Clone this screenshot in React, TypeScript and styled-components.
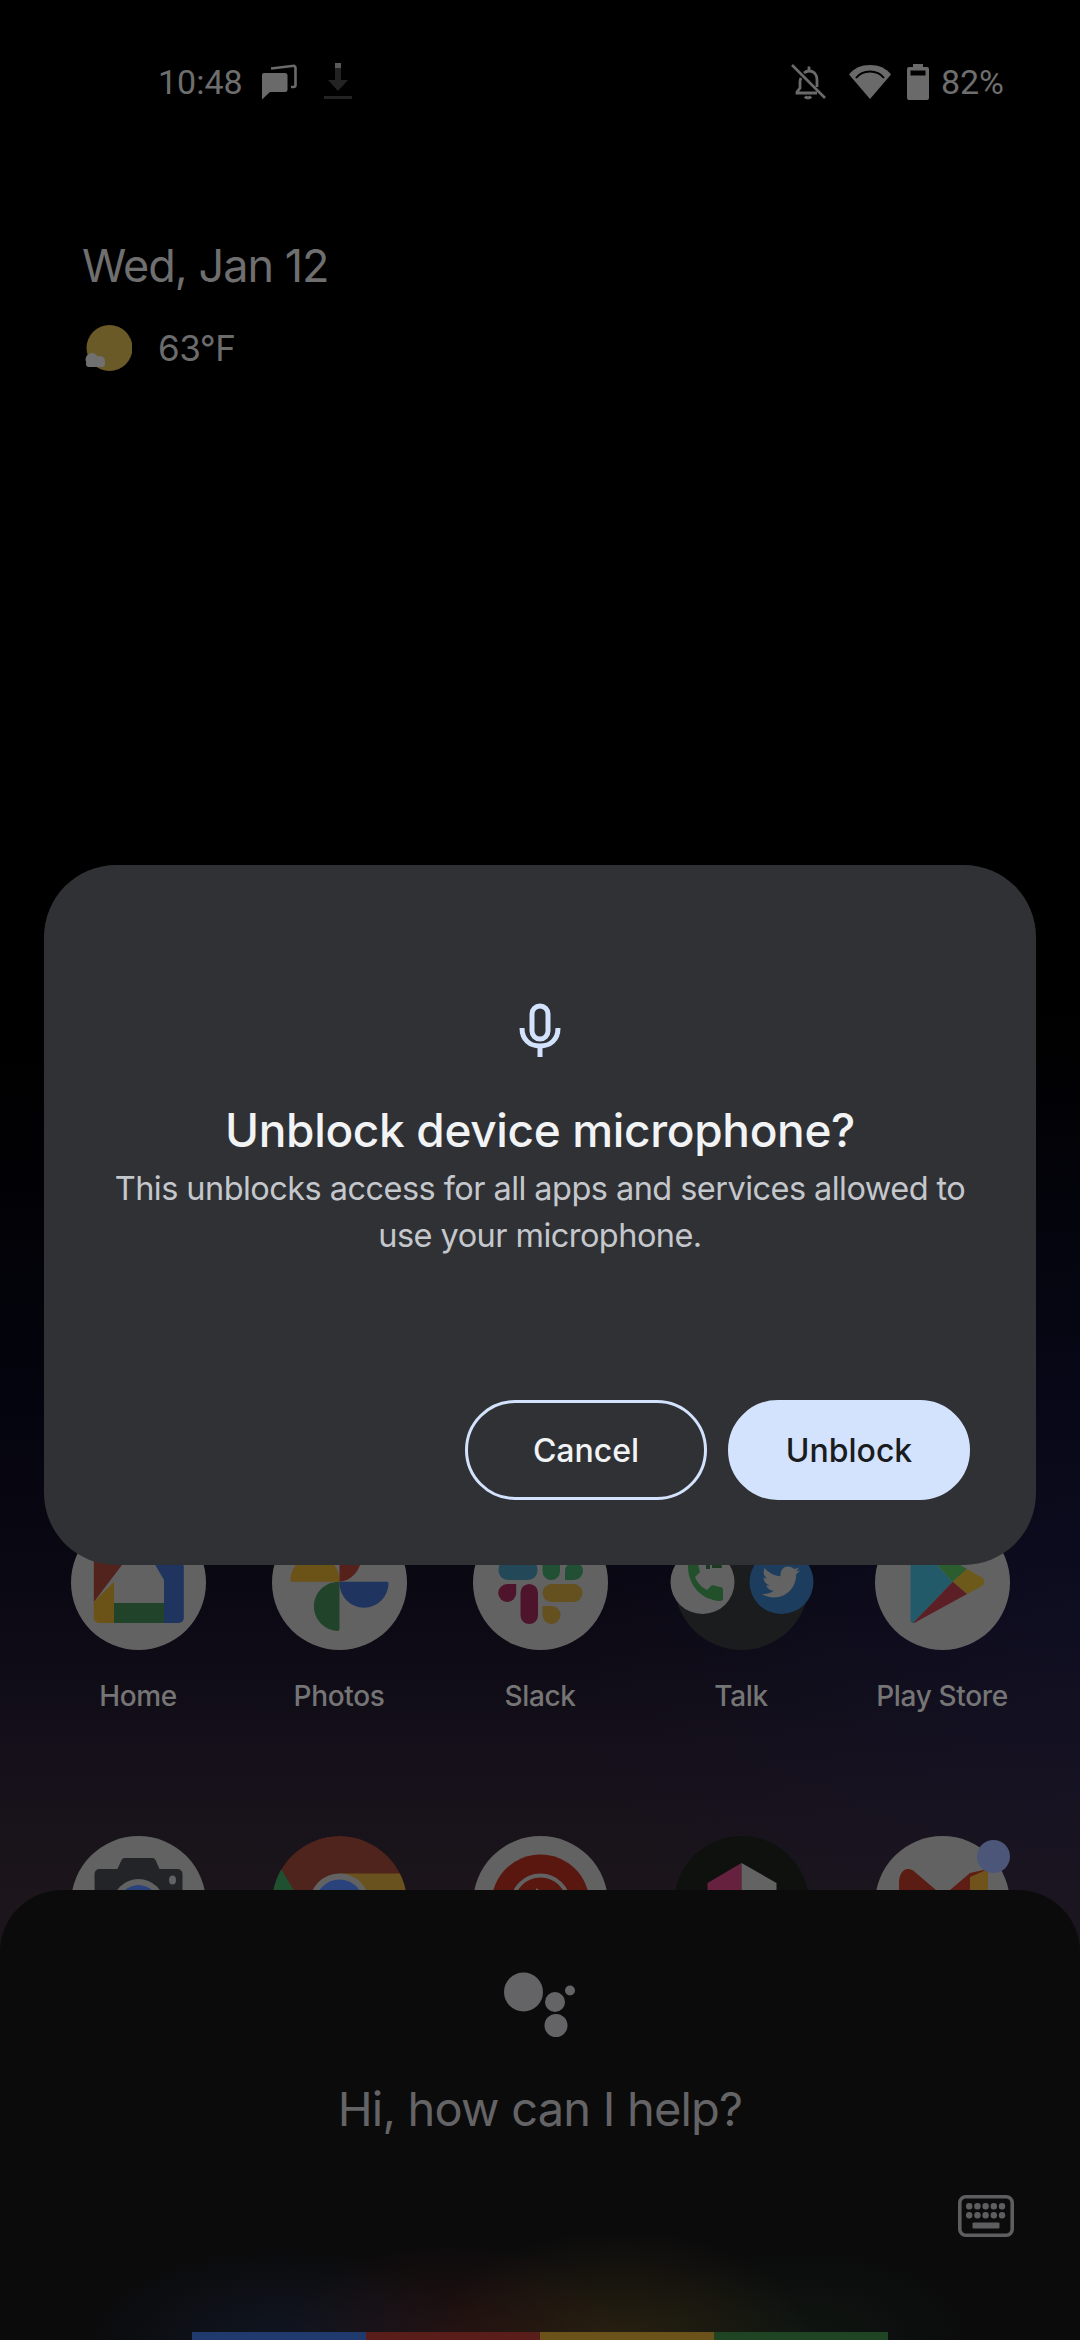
import * as React from 'react'
import styled, { createGlobalStyle } from 'styled-components'
import { FaTwitter } from 'react-icons/fa'

const GlobalStyle = createGlobalStyle`
  html, body {
    margin: 0;
    padding: 0;
    background: #000;
  }
`

const Screen = styled.div`
  position: relative;
  width: 1080px;
  height: 2340px;
  overflow: hidden;
  display: flex;
  flex-direction: column;
  font-family: Inter, Roboto, sans-serif;
  background:
    radial-gradient(ellipse 500px 600px at 1080px 1600px, rgba(20, 22, 60, 0.3), transparent),
    linear-gradient(180deg, #000 0, #000 1050px, #04040e 1400px, #0a0813 1580px, #15101a 1760px, #1c151b 1900px);
`

const StatusBar = styled.div`
  display: flex;
  align-items: center;
  height: 48px;
  margin-top: 58px;
  padding: 0 76px 0 158px;
  color: #6e6e6e;
  font-family: Roboto, sans-serif;
  font-size: 34px;
`

const StatusGroup = styled.div<{ $gap: number }>`
  display: flex;
  align-items: center;
  gap: ${({ $gap }) => $gap}px;
`

const Spacer = styled.div`
  flex: 1;
`

const DateBlock = styled.div`
  margin-top: 130px;
  padding-left: 82px;
`

const DateText = styled.div`
  color: #6f6f6f;
  font-size: 45px;
  line-height: 60px;
  letter-spacing: -1px;
`

const WeatherRow = styled.div`
  display: flex;
  align-items: center;
  gap: 26px;
  margin-top: 27px;
  color: #6c6c6c;
  font-size: 35px;
  line-height: 50px;
  letter-spacing: -0.5px;
`

const AppGrid = styled.div`
  display: grid;
  grid-template-columns: repeat(5, 201px);
  grid-template-rows: 321px 135px;
  margin-top: auto;
  padding: 0 37.5px 369px;
`

const AppTile = styled.div`
  position: relative;
  display: flex;
  flex-direction: column;
  align-items: center;
`

const AppIcon = styled.svg`
  display: block;
  width: 135px;
  height: 135px;
  overflow: visible;
`

const RoundAppIcon = styled(AppIcon)`
  overflow: hidden;
  border-radius: 50%;
`

const AppLabel = styled.div`
  margin-top: 28px;
  color: #757575;
  font-size: 28px;
  font-weight: 500;
  line-height: 36px;
  letter-spacing: -0.35px;
  white-space: nowrap;
`

const Badge = styled.div`
  position: absolute;
  top: 4px;
  left: 135px;
  width: 33px;
  height: 33px;
  border-radius: 50%;
  background: #4b5679;
`

const Dialog = styled.div`
  position: absolute;
  top: 865px;
  left: 44px;
  width: 992px;
  height: 700px;
  box-sizing: border-box;
  display: flex;
  flex-direction: column;
  align-items: center;
  padding: 138px 66px 65px;
  border-radius: 72px;
  background: #303135;
`

const DialogTitle = styled.h1`
  margin: 41px 0 0;
  color: #f1f3f4;
  font-size: 46px;
  font-weight: 500;
  line-height: 64px;
  letter-spacing: -0.35px;
  white-space: nowrap;
`

const DialogBody = styled.p`
  margin: 3px 0 0;
  width: 880px;
  color: #c4c7cc;
  font-size: 32.5px;
  line-height: 47px;
  letter-spacing: -0.55px;
  text-align: center;
`

const DialogActions = styled.div`
  display: flex;
  justify-content: flex-end;
  gap: 21px;
  width: 100%;
  margin-top: auto;
`

const PillButton = styled.button<{ $filled?: boolean }>`
  width: 242px;
  height: 100px;
  box-sizing: border-box;
  padding: 0;
  border: 3px solid #d3e3fd;
  border-radius: 50px;
  background: ${({ $filled }) => ($filled ? '#d3e3fd' : 'transparent')};
  color: ${({ $filled }) => ($filled ? '#1b1c1e' : '#f1f3f4')};
  font-family: Inter, Roboto, sans-serif;
  font-size: 32px;
  font-weight: 500;
`

const AssistantSheet = styled.div`
  position: absolute;
  top: 1890px;
  left: 0;
  right: 0;
  bottom: 0;
  display: flex;
  flex-direction: column;
  align-items: center;
  padding-top: 82px;
  border-radius: 62px 62px 0 0;
  background:
    radial-gradient(ellipse 190px 90px at 280px 450px, rgba(33, 58, 110, 0.22), transparent),
    radial-gradient(ellipse 170px 100px at 450px 450px, rgba(90, 30, 26, 0.3), transparent),
    radial-gradient(ellipse 190px 110px at 620px 450px, rgba(106, 82, 26, 0.3), transparent),
    radial-gradient(ellipse 170px 90px at 800px 450px, rgba(31, 68, 36, 0.18), transparent),
    #0b0b0c;
`

const AssistantPrompt = styled.div`
  margin-top: 39px;
  color: #646466;
  font-size: 47px;
  line-height: 64px;
  letter-spacing: -0.8px;
`

const KeyboardButton = styled.div`
  position: absolute;
  top: 305px;
  right: 66px;
  line-height: 0;
`

const ColorBar = styled.div`
  display: flex;
  width: 696px;
  height: 8px;
  margin-top: auto;
`

const ColorSegment = styled.div<{ $color: string }>`
  flex: 1;
  background: ${({ $color }) => $color};
`

const Grey = '#6a6a6a'
const Plate = '#626262'

const ChatIcon = () => (
  <svg width="45" height="36" viewBox="0 0 45 36">
    <path d="M3 9h21a2.500 2.500 0 0 1 2.500 2.500v14a2.500 2.500 0 0 1-2.500 2.500H9l-8 7.500V11a2 2 0 0 1 2-2z" fill={Grey} />
    <path d="M10 4.500 33 1.800a2 2 0 0 1 1.500 2V21a2 2 0 0 1-2 2H30" fill="none" stroke={Grey} strokeWidth="2.600" />
  </svg>
)

const DownloadIcon = () => (
  <svg width="28" height="38" viewBox="0 0 28 38">
    <rect x="11" y="0" width="6" height="5" fill="#5a5a5a" />
    <path d="M11 5h6v12h7L14 28 4 17h7z" fill="#232323" />
    <rect x="0" y="33" width="28" height="3" fill="#232323" />
  </svg>
)

const BellOffIcon = () => (
  <svg width="46" height="36" viewBox="0 0 46 36" fill="none" stroke={Grey} strokeWidth="2.800">
    <path d="M10 14c-.6 1-1 2.300-1 4v6l-3 4v1h20" />
    <path d="M13 9c1.300-1.100 3-2 5-2 5 0 8 3.500 8 9v7" />
    <path d="M18 7V2.500" />
    <path d="M14 32.500a4 4 0 0 0 6 0" strokeWidth="3" />
    <path d="M1 1l33 33" strokeWidth="2.600" />
  </svg>
)

const WifiIcon = () => (
  <svg width="46" height="36" viewBox="0 0 46 36">
    <path d="M0 10.500C5 4 12.500 1 21 1s16 3 21 9.500L21 35z" fill={Grey} />
    <path d="M7 14C10.500 9.500 15.500 7.500 21 7.500S31.500 9.500 35 14" fill="none" stroke="#000" strokeWidth="2" />
  </svg>
)

const BatteryIcon = () => (
  <svg width="22" height="36" viewBox="0 0 22 36">
    <path d="M6 0h10v3h4a2 2 0 0 1 2 2v29a2 2 0 0 1-2 2H2a2 2 0 0 1-2-2V5a2 2 0 0 1 2-2h4z" fill={Grey} />
    <rect x="3.500" y="6.500" width="15" height="5" fill="#000" />
  </svg>
)

const WeatherIcon = () => (
  <svg width="50" height="50" viewBox="0 0 50 50">
    <circle cx="27.500" cy="25" r="23" fill="#6a5a27" />
    <circle cx="10" cy="36.500" r="6.500" fill="#707070" />
    <circle cx="18" cy="38" r="5" fill="#707070" />
    <rect x="4" y="38" width="19" height="6" rx="3" fill="#707070" />
  </svg>
)

const MicIcon = () => (
  <svg width="44" height="54" viewBox="0 0 44 54" fill="none" stroke="#d3e3fd" strokeWidth="5">
    <rect x="14" y="3" width="16" height="33" rx="8" />
    <path d="M4 25c0 12 8 18 18 18s18-6 18-18" />
    <path d="M22 42v12" />
  </svg>
)

const AssistantLogo = () => (
  <svg width="72" height="66" viewBox="0 0 72 66" fill="#646466">
    <circle cx="19.500" cy="20" r="19.500" />
    <circle cx="51" cy="30" r="10" />
    <circle cx="66" cy="18.500" r="5" />
    <circle cx="52" cy="53.500" r="11.500" />
  </svg>
)

const KeyboardIcon = () => (
  <svg width="56" height="42" viewBox="0 0 56 42" fill="#5e5e60">
    <rect x="1.800" y="1.800" width="52.400" height="38.400" rx="6" fill="none" stroke="#5e5e60" strokeWidth="3.600" />
    {[0, 1].map(row =>
      [0, 1, 2, 3, 4].map(col => (
        <rect key={`${ row }-${ col }`} x={ 8 + col * 8.200 } y={ 8 + row * 9 } width="6.400" height="6.600" rx="3" />
      ))
    )}
    <rect x="14.500" y="27.500" width="27" height="6" rx="1" />
  </svg>
)

const HomeApp = () => (
  <AppIcon viewBox="0 0 135 135">
    <circle cx="67.500" cy="67.500" r="67.500" fill={Plate} />
    <path d="M22.800 87V44a6 6 0 0 1 2-4L45 22h22v7z" fill="#51231c" />
    <path d="M22.800 87 43 66.700V108H28a5 5 0 0 1-5.200-5z" fill="#6b5217" />
    <rect x="43" y="88" width="50" height="20" fill="#21432a" />
    <path d="M68 22h18l24 24a8 8 0 0 1 2.800 6v51a5 5 0 0 1-5 5H93V65z" fill="#1f3560" />
  </AppIcon>
)

const PhotosApp = () => (
  <AppIcon viewBox="0 0 135 135">
    <circle cx="67.500" cy="67.500" r="67.500" fill={Plate} />
    <path d="M18.500 65a24.500 24.500 0 0 1 49 0v1.700H20a1.500 1.500 0 0 1-1.500-1.700z" fill="#6b5217" />
    <path d="M67.500 18a24.500 24.500 0 0 1 0 48.700z" fill="#56211a" />
    <path d="M67.500 66.700H115a1.500 1.500 0 0 1 1.500 1.500 24.500 24.500 0 0 1-49 0z" fill="#1f3560" />
    <path d="M67.500 66.700V114a2 2 0 0 1-2 2 24.500 24.500 0 0 1 2-49.300z" fill="#21432a" />
  </AppIcon>
)

const SlackApp = () => (
  <AppIcon viewBox="0 0 135 135">
    <circle cx="67.500" cy="67.500" r="67.500" fill={Plate} />
    <rect x="25.500" y="45" width="39" height="20" rx="9.500" fill="#234858" />
    <rect x="69.500" y="25" width="17.500" height="40" rx="8.700" fill="#215035" />
    <path d="M92 65V56a9 9 0 1 1 9 9z" fill="#215035" />
    <path d="M43.200 69v9a9 9 0 1 1-9-9z" fill="#4e142b" />
    <rect x="47.500" y="69" width="17.500" height="40" rx="8.700" fill="#4e142b" />
    <rect x="69.500" y="69" width="40" height="18" rx="9" fill="#65501f" />
    <path d="M69.500 91h9a9 9 0 1 1-9 9z" fill="#65501f" />
  </AppIcon>
)

const TalkFolder = () => (
  <AppIcon viewBox="0 0 135 135">
    <circle cx="67.500" cy="67.500" r="67.500" fill="#1a1c1e" />
    <circle cx="28.500" cy="67" r="32" fill={Plate} />
    <circle cx="107.500" cy="67" r="32" fill="#1c3d5e" />
    <path d="M14 51c0 20 14 34 32 35 2 0 3-1 3-3v-8c0-2-1-3-3-3l-8-2-5 5c-6-3-10-8-12-13l5-5-2-8c0-2-2-3-4-3h-3c-2 0-3 2-3 5z" fill="#21502b" />
    <path d="M32 41h4v13h-4z M38 41a12 12 0 0 1 10 12h-10z" fill="#1c3a22" />
    <foreignObject x="88" y="48" width="38" height="38">
      <FaTwitter size={ 38 } color="#636363" />
    </foreignObject>
  </AppIcon>
)

const PlayApp = () => (
  <AppIcon viewBox="0 0 135 135">
    <circle cx="67.500" cy="67.500" r="67.500" fill={Plate} />
    <path d="M37 24 77.800 66.700 38 108c-1.500 0-2.500-1-2.500-3V27c0-1 .5-2.500 1.500-3z" fill="#235a6a" />
    <path d="M38 24c1-.500 2 0 3 .500L92 54 77.800 66.700z" fill="#2b5d2f" />
    <path d="M92 54l15 8.500c3 2 3 6 0 8.500L92 79 77.800 66.700z" fill="#6d5a1a" />
    <path d="M77.800 66.700 92 79 41 107c-1 .7-2 1-3 1z" fill="#5c1f26" />
  </AppIcon>
)

const CameraApp = () => (
  <AppIcon viewBox="0 0 135 135">
    <circle cx="67.500" cy="67.500" r="67.500" fill={Plate} />
    <path d="M23.500 38a5 5 0 0 1 5-5h18l4-9a4 4 0 0 1 3-2h28a4 4 0 0 1 3 2l4 9h18a5 5 0 0 1 5 5v60h-87.500z" fill="#222427" />
    <circle cx="67.500" cy="69" r="26" fill={Plate} />
    <circle cx="67.500" cy="69" r="20" fill="#2a437d" />
    <ellipse cx="101.500" cy="44" rx="3.500" ry="4.500" fill={Plate} />
  </AppIcon>
)

const ChromeApp = () => (
  <RoundAppIcon viewBox="0 0 135 135">
    <circle cx="67.500" cy="67.500" r="67.500" fill="#4f241c" />
    <path d="M8 31 38 82 30 135 0 135 0 40z" fill="#1f5131" />
    <path d="M67.500 37.500H135V135H67.500z" fill="#6a521f" />
    <circle cx="67.500" cy="67.500" r="30" fill={Plate} />
    <circle cx="67.500" cy="67.500" r="24" fill="#2a437d" />
  </RoundAppIcon>
)

const MusicApp = () => (
  <AppIcon viewBox="0 0 135 135">
    <circle cx="67.500" cy="67.500" r="67.500" fill={Plate} />
    <circle cx="67.500" cy="67.500" r="49" fill="#59170f" />
    <circle cx="67.500" cy="67.500" r="28" fill="none" stroke={Plate} strokeWidth="4" />
    <path d="M63 52l12 8-12 8z" fill={Plate} />
  </AppIcon>
)

const MailApp = () => (
  <AppIcon viewBox="0 0 135 135">
    <circle cx="67.500" cy="67.500" r="67.500" fill="#0f110f" />
    <path d="M67.500 27 33.500 47v40h34z" fill="#66213f" />
    <path d="M67.500 27l35 20v40h-35z" fill="#636363" />
  </AppIcon>
)

const GmailApp = () => (
  <AppIcon viewBox="0 0 135 135">
    <circle cx="67.500" cy="67.500" r="67.500" fill={Plate} />
    <path d="M24 46c0-6 3-13 9-13 3 0 5 1 8 4l27 23v25H24z" fill="#5b1c14" />
    <path d="M68 60l27-23 18-4v52H68z" fill="#5e1d15" />
    <path d="M95 41l18-8v65H95z" fill="#6f531a" />
  </AppIcon>
)

const dockApps = [
  { label: 'Home', icon: <HomeApp /> },
  { label: 'Photos', icon: <PhotosApp /> },
  { label: 'Slack', icon: <SlackApp /> },
  { label: 'Talk', icon: <TalkFolder /> },
  { label: 'Play Store', icon: <PlayApp /> },
]

const barColors = ['#213a6e', '#5a1e1a', '#6a521a', '#1f4424']

const App = () => (
  <Screen>
    <GlobalStyle />
    <StatusBar>
      <StatusGroup $gap={ 18 }>
        <span>10:48</span>
        <ChatIcon />
        <DownloadIcon />
      </StatusGroup>
      <Spacer />
      <StatusGroup $gap={ 12 }>
        <BellOffIcon />
        <WifiIcon />
        <BatteryIcon />
        <span>82%</span>
      </StatusGroup>
    </StatusBar>

    <DateBlock>
      <DateText>Wed, Jan 12</DateText>
      <WeatherRow>
        <WeatherIcon />
        <span>63°F</span>
      </WeatherRow>
    </DateBlock>

    <AppGrid>
      {dockApps.map(app => (
        <AppTile key={ app.label }>
          {app.icon}
          <AppLabel>{app.label}</AppLabel>
        </AppTile>
      ))}
      <AppTile><CameraApp /></AppTile>
      <AppTile><ChromeApp /></AppTile>
      <AppTile><MusicApp /></AppTile>
      <AppTile><MailApp /></AppTile>
      <AppTile>
        <GmailApp />
        <Badge />
      </AppTile>
    </AppGrid>

    <Dialog>
      <MicIcon />
      <DialogTitle>Unblock device microphone?</DialogTitle>
      <DialogBody>This unblocks access for all apps and services allowed to use your microphone.</DialogBody>
      <DialogActions>
        <PillButton>Cancel</PillButton>
        <PillButton $filled>Unblock</PillButton>
      </DialogActions>
    </Dialog>

    <AssistantSheet>
      <AssistantLogo />
      <AssistantPrompt>Hi, how can I help?</AssistantPrompt>
      <KeyboardButton><KeyboardIcon /></KeyboardButton>
      <ColorBar>
        {barColors.map(color => <ColorSegment key={ color } $color={ color } />)}
      </ColorBar>
    </AssistantSheet>
  </Screen>
)

export default App
